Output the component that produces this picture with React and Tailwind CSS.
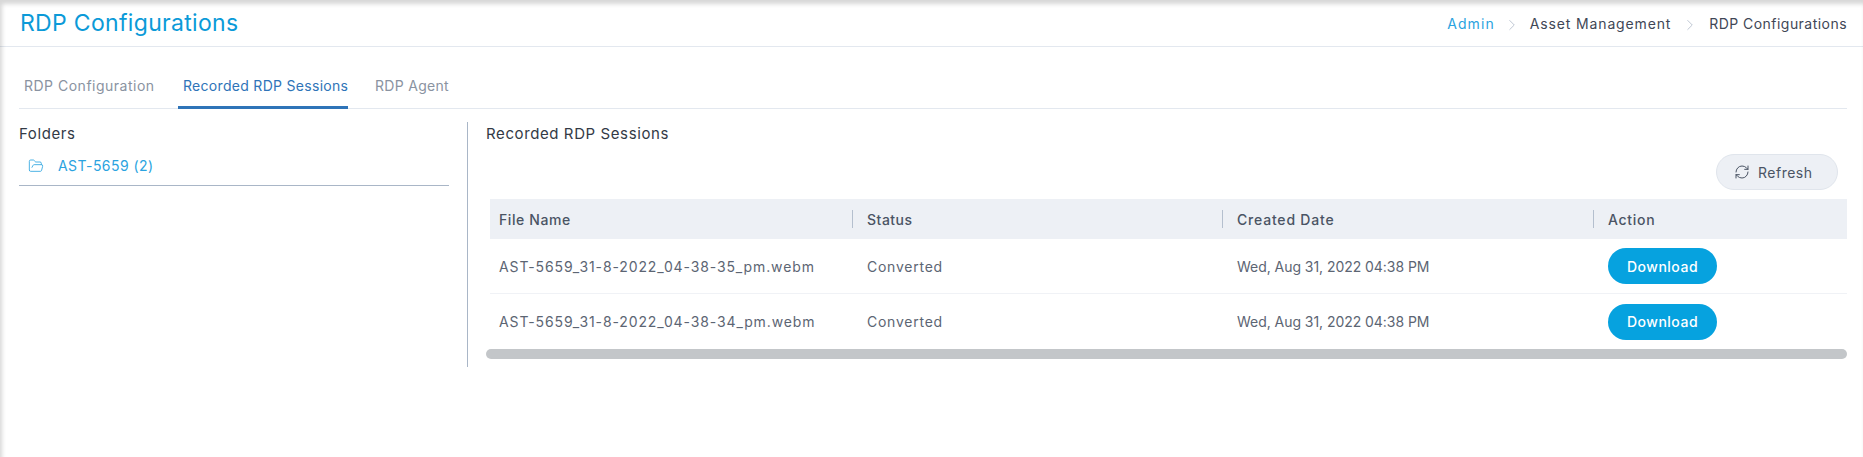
import React from "react";
import { ChevronRight, FolderOpen, RefreshCw } from "lucide-react";

const font = { fontFamily: "Inter, 'Noto Sans', sans-serif" };
const cols = "grid grid-cols-[363px_370px_371px_253px]";

function Row({ name, last }) {
  return (
    <div className={`${cols} h-[55px] items-center text-[14px] text-[#5c6573] ${last ? "" : "border-b border-[#f0f2f6]"}`}>
      <div className="pl-[9px] tracking-[0.88px]">{name}</div>
      <div className="pl-[14px] tracking-[0.75px]">Converted</div>
      <div className="pl-[14px] tracking-[-0.05px]">Wed, Aug 31, 2022 04:38 PM</div>
      <div className="pl-[14px]">
        <button className="w-[109px] h-[36px] rounded-full bg-[#06a2df] text-white text-[14px] font-medium tracking-[0.5px]">Download</button>
      </div>
    </div>
  );
}

function Head({ children, pad, track, last }) {
  return (
    <div className={`h-[18px] flex items-center ${pad} ${track} text-[14px] font-medium text-[#4a5464] ${last ? "" : "border-r border-[#b4bfce]"}`}>
      {children}
    </div>
  );
}

function Crumb({ margin }) {
  return <ChevronRight className={`${margin} mt-[3px] shrink-0`} size={18} strokeWidth={1} color="#a9b4c4" />;
}

export default function App() {
  return (
    <div style={font} className="relative w-[1863px] h-[457px] bg-white overflow-hidden">
      <header className="h-[47px] pl-[20px] pr-[16px] flex items-center justify-between border-b border-[#e3e8ef]">
        <h1 className="text-[23px] pt-px text-[#0b9ad8] font-normal tracking-[0.32px]">RDP Configurations</h1>
        <nav className="flex items-center text-[14px] text-[#3f4756] whitespace-nowrap">
          <span className="text-[#2aa3e0] tracking-[1.1px]">Admin</span>
          <Crumb margin="ml-[8px] mr-[9px]" />
          <span className="tracking-[0.85px]">Asset Management</span>
          <Crumb margin="mx-[10px]" />
          <span className="tracking-[0.46px]">RDP Configurations</span>
        </nav>
      </header>

      <div className="mr-[16px] ml-[19px] mt-[17px] h-[45px] flex border-b border-[#e3e8ef] text-[14px] whitespace-nowrap">
        <div className="w-[159px] pl-[5px] pt-[11px] tracking-[0.5px] text-[#8a93a1]">RDP Configuration</div>
        <div className="w-[170px] pl-[5px] pt-[11px] h-[45px] tracking-[0.3px] border-b-[3px] border-[#2f74b8] text-[#2f74b8]">Recorded RDP Sessions</div>
        <div className="pl-[27px] pt-[11px] tracking-[0.3px] text-[#8a93a1]">RDP Agent</div>
      </div>

      <main className="flex mt-[13px] ml-[19px]">
        <aside className="w-[430px] shrink-0">
          <div className="text-[15px] tracking-[0.6px] text-[#333a46] h-[24px] leading-[24px]">Folders</div>
          <div className="h-[40px] flex items-center gap-[14px] pl-[9px] border-b border-[#a9b6c7] text-[14px] tracking-[0.45px] text-[#2aa3e0]">
            <FolderOpen size={16} strokeWidth={1.25} />
            <span>AST-5659 (2)</span>
          </div>
        </aside>
        <div className="ml-[18px] w-px h-[245px] bg-[#a9b6c7] shrink-0" />
        <section className="ml-[18px] w-[1361px] shrink-0">
          <div className="text-[15px] tracking-[0.6px] text-[#333a46] h-[24px] leading-[24px]">Recorded RDP Sessions</div>
          <div className="flex justify-end mt-[8px] pr-[9px]">
            <button className="w-[122px] h-[36px] pl-[17px] rounded-full bg-[#edf0f5] border border-[#e0e5ec] flex items-center gap-[8px] text-[14px] tracking-[0.5px] text-[#4a5464]">
              <RefreshCw size={16} strokeWidth={1.5} />
              Refresh
            </button>
          </div>
          <div className="ml-[4px] mt-[9px]">
            <div className={`${cols} h-[40px] items-center bg-[#edf0f5]`}>
              <Head pad="pl-[9px]" track="tracking-[0.6px]">File Name</Head>
              <Head pad="pl-[14px]" track="tracking-[0.5px]">Status</Head>
              <Head pad="pl-[14px]" track="tracking-[0.8px]">Created Date</Head>
              <Head pad="pl-[14px]" track="tracking-[0.7px]" last>Action</Head>
            </div>
            <Row name="AST-5659_31-8-2022_04-38-35_pm.webm" />
            <Row name="AST-5659_31-8-2022_04-38-34_pm.webm" last />
          </div>
          <div className="h-[10px] rounded-full bg-[#c3c6c9]" />
        </section>
      </main>

      <div className="absolute inset-0 pointer-events-none shadow-[inset_2px_4px_4px_rgba(0,0,0,0.16)]" />
    </div>
  );
}
